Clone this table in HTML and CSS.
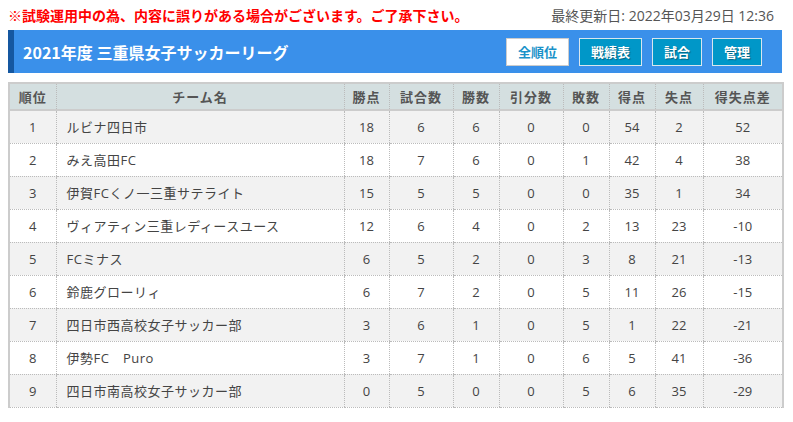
FILE: index.html
```html
<!DOCTYPE html>
<html lang="ja">
<head>
<meta charset="utf-8">
<link rel="stylesheet" href="styles.css">
</head>
<body>
<div class="top">
  <span class="notice">※試験運用中の為、内容に誤りがある場合がございます。ご了承下さい。</span>
  <span class="updated">最終更新日: 2022年03月29日 12:36</span>
</div>
<div class="titlebar">
  <h1>2021年度 三重県女子サッカーリーグ</h1>
  <nav class="btns">
    <a class="btn active">全順位</a>
    <a class="btn">戦績表</a>
    <a class="btn">試合</a>
    <a class="btn">管理</a>
  </nav>
</div>
<table class="standings">
  <colgroup>
    <col class="c-rank"><col class="c-name"><col class="c-pts"><col class="c-gp"><col class="c-w"><col class="c-d"><col class="c-l"><col class="c-gf"><col class="c-ga"><col class="c-gd">
  </colgroup>
  <thead>
    <tr><th>順位</th><th>チーム名</th><th>勝点</th><th>試合数</th><th>勝数</th><th>引分数</th><th>敗数</th><th>得点</th><th>失点</th><th>得失点差</th></tr>
  </thead>
  <tbody>
    <tr><td>1</td><td class="name">ルビナ四日市</td><td>18</td><td>6</td><td>6</td><td>0</td><td>0</td><td>54</td><td>2</td><td>52</td></tr>
    <tr><td>2</td><td class="name">みえ高田FC</td><td>18</td><td>7</td><td>6</td><td>0</td><td>1</td><td>42</td><td>4</td><td>38</td></tr>
    <tr><td>3</td><td class="name">伊賀FCくノ一三重サテライト</td><td>15</td><td>5</td><td>5</td><td>0</td><td>0</td><td>35</td><td>1</td><td>34</td></tr>
    <tr><td>4</td><td class="name">ヴィアティン三重レディースユース</td><td>12</td><td>6</td><td>4</td><td>0</td><td>2</td><td>13</td><td>23</td><td>-10</td></tr>
    <tr><td>5</td><td class="name">FCミナス</td><td>6</td><td>5</td><td>2</td><td>0</td><td>3</td><td>8</td><td>21</td><td>-13</td></tr>
    <tr><td>6</td><td class="name">鈴鹿グローリィ</td><td>6</td><td>7</td><td>2</td><td>0</td><td>5</td><td>11</td><td>26</td><td>-15</td></tr>
    <tr><td>7</td><td class="name">四日市西高校女子サッカー部</td><td>3</td><td>6</td><td>1</td><td>0</td><td>5</td><td>1</td><td>22</td><td>-21</td></tr>
    <tr><td>8</td><td class="name">伊勢FC　Puro</td><td>3</td><td>7</td><td>1</td><td>0</td><td>6</td><td>5</td><td>41</td><td>-36</td></tr>
    <tr><td>9</td><td class="name">四日市南高校女子サッカー部</td><td>0</td><td>5</td><td>0</td><td>0</td><td>5</td><td>6</td><td>35</td><td>-29</td></tr>
  </tbody>
</table>
</body>
</html>
```
FILE: styles.css
```css
* { box-sizing: border-box; }
body {
  margin: 0;
  padding: 0 8px;
  width: 790px;
  font-family: "Open Sans", "Noto Sans CJK JP", sans-serif;
  color: #444;
  background: #fff;
}
.top {
  display: flex;
  justify-content: space-between;
  align-items: center;
  height: 30px;
  padding-right: 8px;
}
.notice {
  color: #f00;
  font-weight: bold;
  font-size: 14px;
  font-family: "Noto Sans CJK JP", sans-serif;
}
.updated {
  color: #555;
  font-size: 14px;
  font-family: "Open Sans", "Noto Sans CJK JP", sans-serif;
}
.titlebar {
  width: 774px;
  height: 43px;
  background: #3a90ea;
  border-left: 6px solid #1557a0;
  display: flex;
  align-items: center;
  justify-content: space-between;
  padding: 0 20px 0 9px;
}
.titlebar h1 {
  margin: 0;
  color: #fff;
  font-size: 16px;
  font-weight: bold;
  font-family: "Noto Sans CJK JP", sans-serif;
}
.btns {
  display: flex;
  gap: 10px;
}
.btn {
  display: flex;
  align-items: center;
  justify-content: center;
  height: 28px;
  padding: 0 11px;
  background: #0097c8;
  border: 1px solid #d8e6ee;
  color: #fff;
  font-weight: bold;
  font-size: 13px;
  font-family: "Noto Sans CJK JP", sans-serif;
  text-shadow: 1px 1px 1px rgba(0,0,0,0.35);
}
.btn.active {
  background: #fff;
  color: #1a92c9;
  border-color: #ccc;
  text-shadow: none;
}
.standings {
  margin-top: 9px;
  width: 774px;
  border-collapse: collapse;
  table-layout: fixed;
  font-size: 13px;
  border-left: 2px solid #ccc;
  border-right: 2px solid #ccc;
  border-top: 2px solid #ccc;
}
.c-rank { width: 47px; }
.c-name { width: 288px; }
.c-pts { width: 45px; }
.c-gp { width: 64px; }
.c-w { width: 46px; }
.c-d { width: 64px; }
.c-l { width: 46px; }
.c-gf { width: 46px; }
.c-ga { width: 48px; }
.c-gd { width: 80px; }
.standings th {
  background: #d4dfe0;
  color: #555;
  font-weight: bold;
  height: 27px;
  font-family: "Noto Sans CJK JP", sans-serif;
  border-left: 1px dotted #bbb;
  border-bottom: 2px solid #ccc;
  padding: 0;
  letter-spacing: 1px;
}
.standings td {
  height: 33px;
  text-align: center;
  border-left: 1px dotted #bbb;
  border-bottom: 1px dotted #bbb;
  padding: 0;
  color: #444;
}
.standings tbody tr:nth-child(odd) td { background: #f2f2f2; }
.standings td.name {
  text-align: left;
  padding-left: 10px;
  font-family: "Open Sans", "Noto Sans CJK JP", sans-serif;
  letter-spacing: 0.5px;
}
```
